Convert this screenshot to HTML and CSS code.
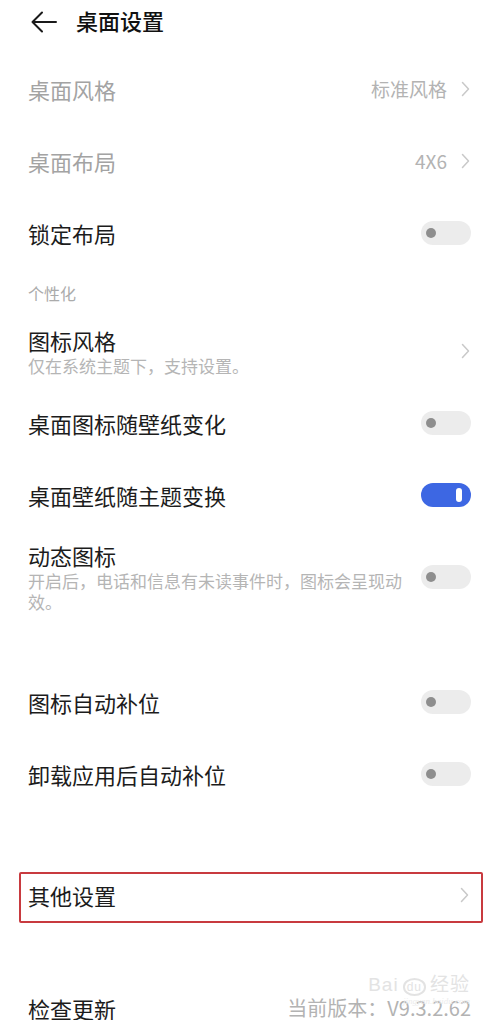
FILE: index.html
```html
<!DOCTYPE html>
<html lang="zh-CN">
<head>
<meta charset="utf-8">
<link rel="stylesheet" href="styles.css">
</head>
<body>
<div class="page">
  <header class="topbar">
    <svg class="back" width="26" height="22" viewBox="0 0 26 22"><path d="M11 1.5 L1.5 11 L11 20.5 M1.5 11 H25" fill="none" stroke="#1a1a1a" stroke-width="2" stroke-linecap="round" stroke-linejoin="round"/></svg>
    <h1 class="title">桌面设置</h1>
  </header>

  <div class="list">
    <div class="row first">
      <div class="label disabled">桌面风格</div>
      <div class="value">标准风格</div>
      <svg class="chev" width="9" height="16" viewBox="0 0 9 16"><path d="M1.5 1.5 L7.5 8 L1.5 14.5" fill="none" stroke="#c9c9c9" stroke-width="1.5" stroke-linecap="round" stroke-linejoin="round"/></svg>
    </div>
    <div class="row">
      <div class="label disabled">桌面布局</div>
      <div class="value">4X6</div>
      <svg class="chev" width="9" height="16" viewBox="0 0 9 16"><path d="M1.5 1.5 L7.5 8 L1.5 14.5" fill="none" stroke="#c9c9c9" stroke-width="1.5" stroke-linecap="round" stroke-linejoin="round"/></svg>
    </div>
    <div class="row">
      <div class="label">锁定布局</div>
      <div class="toggle"><span class="knob"></span></div>
    </div>

    <div class="section">个性化</div>

    <div class="row tall">
      <div class="text">
        <div class="label">图标风格</div>
        <div class="sub">仅在系统主题下，支持设置。</div>
      </div>
      <svg class="chev" width="9" height="16" viewBox="0 0 9 16"><path d="M1.5 1.5 L7.5 8 L1.5 14.5" fill="none" stroke="#c9c9c9" stroke-width="1.5" stroke-linecap="round" stroke-linejoin="round"/></svg>
    </div>
    <div class="row">
      <div class="label">桌面图标随壁纸变化</div>
      <div class="toggle"><span class="knob"></span></div>
    </div>
    <div class="row">
      <div class="label">桌面壁纸随主题变换</div>
      <div class="toggle on"><span class="knob"></span></div>
    </div>
    <div class="row taller">
      <div class="text narrow">
        <div class="label">动态图标</div>
        <div class="sub">开启后，电话和信息有未读事件时，图标会呈现动效。</div>
      </div>
      <div class="toggle"><span class="knob"></span></div>
    </div>

    <div class="row spaced">
      <div class="label">图标自动补位</div>
      <div class="toggle"><span class="knob"></span></div>
    </div>
    <div class="row">
      <div class="label">卸载应用后自动补位</div>
      <div class="toggle"><span class="knob"></span></div>
    </div>

    <div class="row boxed">
      <div class="label">其他设置</div>
      <svg class="chev" width="9" height="16" viewBox="0 0 9 16"><path d="M1.5 1.5 L7.5 8 L1.5 14.5" fill="none" stroke="#c9c9c9" stroke-width="1.5" stroke-linecap="round" stroke-linejoin="round"/></svg>
    </div>

    <div class="row last">
      <div class="label">检查更新</div>
      <div class="value version">当前版本：V9.3.2.62</div>
      <div class="watermark"><span class="wm-main">Bai<span class="paw">du</span>经验</span><span class="wm-url">jingyan.baidu.com</span></div>
    </div>
  </div>
</div>
</body>
</html>
```

FILE: styles.css
```css
* { box-sizing: border-box; }
html, body {
  margin: 0;
  padding: 0;
  background: #ffffff;
}
body {
  font-family: "Noto Sans CJK SC", "Noto Sans", sans-serif;
  color: #1a1a1a;
  width: 500px;
  height: 1020px;
  overflow: hidden;
}
.page {
  display: flex;
  flex-direction: column;
}
.topbar {
  height: 40px;
  display: flex;
  align-items: flex-start;
  padding-left: 31px;
  gap: 19px;
}
.back {
  display: block;
  margin-top: 11px;
}
.title {
  margin: 5px 0 0;
  font-size: 22px;
  font-weight: 500;
  line-height: 30px;
  color: #111;
}
.list {
  display: flex;
  flex-direction: column;
}
.row {
  position: relative;
  height: 72px;
  display: flex;
  align-items: center;
  padding: 0 29px 0 28px;
}
.row.first { margin-top: 13px; }
.label {
  font-size: 22px;
  line-height: 28px;
  color: #1c1c1c;
  flex: 1;
  white-space: nowrap;
}
.label.disabled { color: #a3a3a3; }
.value {
  font-size: 19px;
  line-height: 26px;
  color: #b3b3b3;
  margin-right: 14px;
}
.chev {
  display: block;
  margin-right: 1px;
}
.section {
  height: 45px;
  padding: 15px 0 0 28px;
  font-size: 16px;
  line-height: 18px;
  color: #ababab;
}
.row.tall { height: 73px; }
.row.taller { height: 91px; }
.text {
  flex: 1;
  display: flex;
  flex-direction: column;
}
.text .label { flex: none; }
.text.narrow { max-width: 380px; margin-right: 14px; }
.sub {
  font-size: 17px;
  line-height: 21px;
  color: #b5b5b5;
  margin-top: 1px;
}
.toggle {
  width: 50px;
  height: 24px;
  border-radius: 12px;
  background: #ececec;
  position: relative;
  flex: none;
}
.toggle .knob {
  position: absolute;
  left: 5px;
  top: 7px;
  width: 10px;
  height: 10px;
  border-radius: 50%;
  background: #8e8e8e;
}
.toggle.on { background: #3d67e3; }
.toggle.on .knob {
  left: 35px;
  top: 5px;
  width: 6px;
  height: 14px;
  border-radius: 3px;
  background: #ffffff;
}
.row.spaced { margin-top: 44px; }
.row.boxed {
  margin: 62px 17px 0 19px;
  height: 51px;
  border: 2px solid #c83a3f;
  border-radius: 2px;
  padding: 0 11px 6px 7px;
}
.row.last { margin-top: 49px; }
.version { margin-right: 0; font-size: 20px; }
.watermark {
  position: absolute;
  right: 30px;
  top: 3px;
  display: flex;
  flex-direction: column;
  align-items: flex-end;
  color: #e3e3e3;
  pointer-events: none;
}
.wm-main {
  font-family: "Liberation Sans", sans-serif;
  font-size: 19px;
  line-height: 20px;
  letter-spacing: 1px;
}
.paw {
  display: inline-block;
  font-size: 12px;
  border: 2px solid #e3e3e3;
  border-radius: 50%;
  padding: 0 2px;
  margin: 0 4px;
  line-height: 14px;
}
.wm-url {
  font-family: "Liberation Serif", serif;
  font-style: italic;
  font-size: 9px;
  line-height: 10px;
  color: #ececec;
}
```
